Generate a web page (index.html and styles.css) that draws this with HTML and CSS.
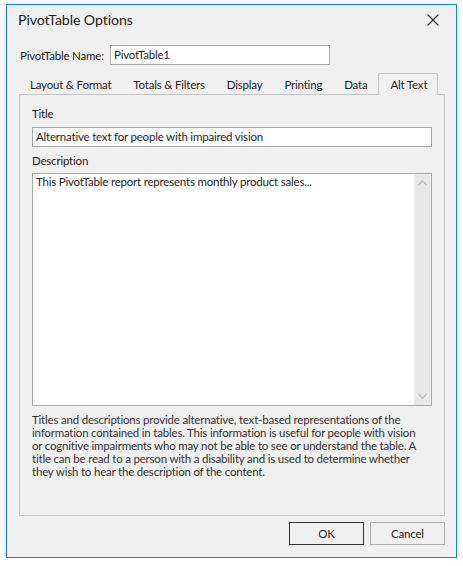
FILE: index.html
```html
<!DOCTYPE html>
<html>
<head>
<meta charset="utf-8">
<link rel="stylesheet" href="styles.css">
</head>
<body>
<div class="window">
  <div class="titlebar">
    <span class="title">PivotTable Options</span>
    <svg class="close" width="12" height="12" viewBox="0 0 12 12"><path d="M0.5 0.5 L11.5 11.5 M11.5 0.5 L0.5 11.5" stroke="#333" stroke-width="1.1" fill="none"/></svg>
  </div>
  <div class="name-row">
    <span class="label">PivotTable Name:</span>
    <div class="input name-input">PivotTable1</div>
  </div>
  <div class="tabs">
    <div class="tab">Layout &amp; Format</div>
    <div class="tab">Totals &amp; Filters</div>
    <div class="tab">Display</div>
    <div class="tab">Printing</div>
    <div class="tab">Data</div>
    <div class="tab active">Alt Text</div>
  </div>
  <div class="panel">
    <div class="field-label">Title</div>
    <div class="input title-input">Alternative text for people with impaired vision</div>
    <div class="field-label desc-label">Description</div>
    <div class="textarea">
      <div class="ta-text">This PivotTable report represents monthly product sales...</div>
      <div class="scrollbar">
        <svg width="17" height="10" viewBox="0 0 17 10"><path d="M4.5 7 L8.5 3 L12.5 7" stroke="#c2c2c2" stroke-width="1.6" fill="none"/></svg>
        <svg width="17" height="10" viewBox="0 0 17 10"><path d="M4.5 3 L8.5 7 L12.5 3" stroke="#c2c2c2" stroke-width="1.6" fill="none"/></svg>
      </div>
    </div>
    <p class="help">Titles and descriptions provide alternative, text-based representations of the<br>information contained in tables. This information is useful for people with vision<br>or cognitive impairments who may not be able to see or understand the table. A<br>title can be read to a person with a disability and is used to determine whether<br>they wish to hear the description of the content.</p>
  </div>
  <div class="footer">
    <div class="btn default">OK</div>
    <div class="btn">Cancel</div>
  </div>
</div>
</body>
</html>
```
FILE: styles.css
```css
* { box-sizing: border-box; }
html, body { margin: 0; padding: 0; background: #ffffff; }
body {
  font-family: Lato, "Noto Sans", sans-serif;
  font-size: 11.5px;
  letter-spacing: -0.2px;
  color: #1f1f1f;
  white-space: nowrap;
}
.window {
  margin: 4px 0 0 6px;
  width: 451px;
  height: 554px;
  background: #f0f0f0;
  border: 1px solid #1883d7;
  box-shadow: 0 1px 6px rgba(0,0,0,0.18);
  display: flex;
  flex-direction: column;
}
.titlebar {
  height: 30px;
  display: flex;
  align-items: center;
  justify-content: space-between;
  padding: 0 17px 0 11px;
}
.title {
  font-size: 14.2px;
  letter-spacing: -0.1px;
  color: #222;
  line-height: 30px;
}
.close { display: block; margin-top: 0; }
.name-row {
  margin-top: 10px;
  height: 20px;
  display: flex;
  align-items: center;
  padding-left: 13px;
}
.label { width: 90px; }
.input {
  background: #fff;
  border: 1px solid #a9a9a9;
  height: 20px;
  line-height: 18px;
  padding-left: 3px;
}
.name-input { width: 220px; }
.tabs {
  margin-top: 8px;
  margin-left: 12px;
  height: 21px;
  display: flex;
  position: relative;
  z-index: 1;
}
.tab {
  padding: 0 10px;
  line-height: 21px;
  height: 21px;
  border: 1px solid transparent;
  border-bottom: none;
}
.tab.active {
  border-color: #c4c4c4;
  background: #f0f0f0;
  height: 22px;
  padding: 0 10px 0 11px;
  line-height: 21px;
}
.panel {
  margin-left: 12px;
  width: 426px;
  height: 422px;
  border: 1px solid #c4c4c4;
  padding: 11px 11px 0 12px;
}
.field-label { line-height: 15px; }
.title-input {
  margin-top: 6px;
  width: 400px;
}
.desc-label { margin-top: 6px; }
.textarea {
  margin-top: 5px;
  width: 400px;
  height: 233px;
  background: #fff;
  border: 1px solid #a9a9a9;
  display: flex;
}
.ta-text {
  flex: 1;
  padding: 0 0 0 3px;
  line-height: 15px;
}
.scrollbar {
  width: 17px;
  background: #e8e8e8;
  display: flex;
  flex-direction: column;
  justify-content: space-between;
  padding: 4px 0 4px;
}
.scrollbar svg { display: block; }
.help {
  margin: 7px 0 0 0;
  line-height: 13px;
  color: #333;
}
.footer {
  margin-top: 6px;
  display: flex;
  justify-content: flex-end;
  gap: 6px;
  padding-right: 11px;
}
.btn {
  width: 75px;
  height: 23px;
  border: 1px solid #adadad;
  background: #f0f0f0;
  text-align: center;
  line-height: 21px;
}
.btn.default { border-color: #333; }
```
